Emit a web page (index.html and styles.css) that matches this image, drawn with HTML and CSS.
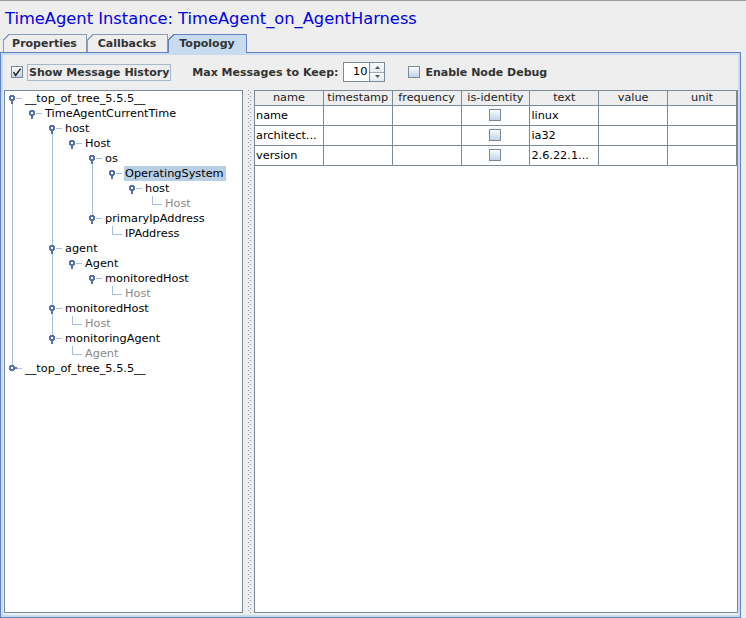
FILE: index.html
```html
<!DOCTYPE html>
<html>
<head>
<meta charset="utf-8">
<title>TimeAgent Instance</title>
<link rel="stylesheet" href="styles.css">
</head>
<body>
<div class="title">TimeAgent Instance: TimeAgent_on_AgentHarness</div>
<div class="tabs">
  <div class="tab tab-props">Properties</div>
  <div class="tab tab-cb">Callbacks</div>
  <div class="tab tab-topo selected">Topology</div>
</div>
<div class="panel">
  <div class="panel-inner">
    <div class="toolbar">
      <span class="chk"><svg width="10" height="10" viewBox="0 0 10 10"><path d="M1.6 5.2 L3.6 8.4 L8.6 1.6" fill="none" stroke="#222" stroke-width="1.5"/></svg></span>
      <span class="focus-label">Show Message History</span>
      <span class="label max-label">Max Messages to Keep:</span>
      <span class="spinner">
        <span class="spin-field">10</span>
        <span class="spin-btns">
          <span class="spin-btn up"><svg width="5" height="3" viewBox="0 0 5 3"><path d="M0 3 L2.5 0 L5 3 Z" fill="#555"/></svg></span>
          <span class="spin-btn"><svg width="5" height="3" viewBox="0 0 5 3"><path d="M0 0 L2.5 3 L5 0 Z" fill="#555"/></svg></span>
        </span>
      </span>
      <span class="chk chk-debug"></span>
      <span class="label debug-label">Enable Node Debug</span>
    </div>
    <div class="split">
      <div class="tree">
        <div class="row"><span class="h nx"></span><span class="lbl">__top_of_tree_5.5.5__</span></div>
        <div class="row"><span class="c p"></span><span class="h"></span><span class="lbl">TimeAgentCurrentTime</span></div>
        <div class="row"><span class="c p"></span><span class="c"></span><span class="h nx"></span><span class="lbl">host</span></div>
        <div class="row"><span class="c p"></span><span class="c"></span><span class="c p"></span><span class="h"></span><span class="lbl">Host</span></div>
        <div class="row"><span class="c p"></span><span class="c"></span><span class="c p"></span><span class="c"></span><span class="h nx"></span><span class="lbl">os</span></div>
        <div class="row"><span class="c p"></span><span class="c"></span><span class="c p"></span><span class="c"></span><span class="c p"></span><span class="h"></span><span class="lbl sel">OperatingSystem</span></div>
        <div class="row"><span class="c p"></span><span class="c"></span><span class="c p"></span><span class="c"></span><span class="c p"></span><span class="c"></span><span class="h"></span><span class="lbl">host</span></div>
        <div class="row leaf"><span class="c p"></span><span class="c"></span><span class="c p"></span><span class="c"></span><span class="c p"></span><span class="c"></span><span class="c"></span><span class="lf"></span><span class="lbl">Host</span></div>
        <div class="row"><span class="c p"></span><span class="c"></span><span class="c p"></span><span class="c"></span><span class="h pv"></span><span class="lbl">primaryIpAddress</span></div>
        <div class="row"><span class="c p"></span><span class="c"></span><span class="c p"></span><span class="c"></span><span class="c"></span><span class="lf"></span><span class="lbl">IPAddress</span></div>
        <div class="row"><span class="c p"></span><span class="c"></span><span class="h pv nx"></span><span class="lbl">agent</span></div>
        <div class="row"><span class="c p"></span><span class="c"></span><span class="c p"></span><span class="h"></span><span class="lbl">Agent</span></div>
        <div class="row"><span class="c p"></span><span class="c"></span><span class="c p"></span><span class="c"></span><span class="h"></span><span class="lbl">monitoredHost</span></div>
        <div class="row leaf"><span class="c p"></span><span class="c"></span><span class="c p"></span><span class="c"></span><span class="c"></span><span class="lf"></span><span class="lbl">Host</span></div>
        <div class="row"><span class="c p"></span><span class="c"></span><span class="h pv nx"></span><span class="lbl">monitoredHost</span></div>
        <div class="row leaf"><span class="c p"></span><span class="c"></span><span class="c p"></span><span class="lf"></span><span class="lbl">Host</span></div>
        <div class="row"><span class="c p"></span><span class="c"></span><span class="h pv"></span><span class="lbl">monitoringAgent</span></div>
        <div class="row leaf"><span class="c p"></span><span class="c"></span><span class="c"></span><span class="lf"></span><span class="lbl">Agent</span></div>
        <div class="row"><span class="h col pv"></span><span class="lbl">__top_of_tree_5.5.5__</span></div>
      </div>
      <div class="divider"></div>
      <div class="tablepane">
        <table class="grid">
          <thead>
            <tr><th>name</th><th>timestamp</th><th>frequency</th><th>is-identity</th><th>text</th><th>value</th><th>unit</th></tr>
          </thead>
          <tbody>
            <tr><td>name</td><td></td><td></td><td class="ctr"><span class="tchk"></span></td><td>linux</td><td></td><td></td></tr>
            <tr><td>architect...</td><td></td><td></td><td class="ctr"><span class="tchk"></span></td><td>ia32</td><td></td><td></td></tr>
            <tr><td>version</td><td></td><td></td><td class="ctr"><span class="tchk"></span></td><td>2.6.22.1...</td><td></td><td></td></tr>
          </tbody>
        </table>
      </div>
    </div>
  </div>
</div>
</body>
</html>
```
FILE: styles.css
```css
* { box-sizing: border-box; }
html, body { margin: 0; padding: 0; }
body {
  width: 746px;
  height: 618px;
  overflow: hidden;
  background: #eeeeee;
  border-top: 1px solid #9a9a9a;
  font-family: "DejaVu Sans", sans-serif;
  color: #000;
}

/* title */
.title {
  height: 33px;
  padding: 3px 0 0 5px;
  font-size: 16.3px;
  line-height: 30px;
  color: #0000e8;
  white-space: nowrap;
}

/* tabs */
.tabs {
  display: flex;
  align-items: flex-start;
  height: 18px;
  padding-left: 3px;
  position: relative;
  z-index: 1;
}
.tab {
  --bc: #8a9cb4;
  --bg: #eeeeee;
  height: 18px;
  padding-top: 1px;
  border-right: 1px solid var(--bc);
  font-size: 11px;
  font-weight: bold;
  line-height: 17px;
  color: #333;
  text-align: center;
  white-space: nowrap;
  background:
    linear-gradient(to bottom right, #eeeeee 0 calc(50% - 0.8px), var(--bc) calc(50% - 0.8px) calc(50% + 0.5px), transparent calc(50% + 0.5px)) 0 0 / 7px 7px no-repeat,
    linear-gradient(var(--bc), var(--bc)) 0 0 / 100% 1px no-repeat,
    linear-gradient(var(--bc), var(--bc)) 0 0 / 1px 100% no-repeat,
    var(--bg);
}
.tab-props { width: 84px; }
.tab-cb { width: 81px; }
.tab-topo { width: 79px; }
.tab.selected {
  --bc: #6382bf;
  --bg: #c8dcf0;
  height: 19px;
}

/* panel */
.panel {
  width: 741px;
  height: 566px;
  border: 1px solid #6382bf;
}
.panel-inner {
  height: 100%;
  border: 2px solid #c8dcf0;
  display: flex;
  flex-direction: column;
}

/* toolbar */
.toolbar {
  height: 35px;
  flex: none;
  display: flex;
  align-items: center;
  padding: 0 0 1px 8px;
  font-size: 11px;
  font-weight: bold;
  color: #333;
  white-space: nowrap;
}
.chk {
  width: 12px;
  height: 12px;
  flex: none;
  border: 1px solid #7a8a99;
  background: linear-gradient(#fbfcfe, #dce6f1 50%, #c2d4e8);
  display: flex;
}
.focus-label {
  margin-left: 4px;
  height: 17px;
  line-height: 15px;
  padding: 0 1px;
  border: 1px solid #a6b8cc;
}
.max-label { margin-left: 21px; }
.spinner {
  margin-left: 5px;
  display: flex;
  height: 20px;
  width: 42px;
}
.spin-field {
  width: 26px;
  height: 20px;
  border: 1px solid #7a8a99;
  border-right: none;
  background: #fff;
  font-size: 11.3px;
  font-weight: normal;
  color: #000;
  text-align: right;
  padding-right: 2px;
  line-height: 18px;
}
.spin-btns {
  width: 16px;
  height: 20px;
  display: flex;
  flex-direction: column;
  border: 1px solid #7a8a99;
}
.spin-btn {
  flex: 1;
  display: flex;
  align-items: center;
  justify-content: center;
  background: linear-gradient(#fafcfe, #e3eaf2);
}
.spin-btn.up { border-bottom: 1px solid #9aa8b8; }
.chk-debug { margin-left: 23px; }
.debug-label { margin-left: 5px; }

/* split pane */
.split {
  flex: 1;
  display: flex;
  padding: 0 0 2px 1px;
}
.tree {
  --ln: #a9c0da;
  --ic: #5573b2;
  width: 239px;
  height: 523px;
  flex: none;
  border: 1px solid #7a8a99;
  background: #fff;
  font-size: 11.3px;
}
.row {
  display: flex;
  height: 15px;
}
.c, .h, .lf {
  width: 20px;
  height: 15px;
  flex: none;
}
.c.p {
  background: linear-gradient(var(--ln), var(--ln)) 7px 0 / 1px 100% no-repeat;
}
.h {
  --pv: linear-gradient(transparent, transparent);
  --nx: linear-gradient(transparent, transparent);
  --stem: linear-gradient(var(--ic), var(--ic)) 6px 9px / 2px 4px no-repeat;
  background:
    radial-gradient(circle at 7px 7px, #ffffff 0 1.2px, var(--ic) 1.5px 3px, transparent 3.4px),
    var(--stem),
    linear-gradient(var(--ln), var(--ln)) 11px 7px / 6px 1px no-repeat,
    var(--pv),
    var(--nx);
}
.h.col {
  --stem: linear-gradient(var(--ic), var(--ic)) 9px 6px / 3px 2px no-repeat;
}
.h.pv {
  --pv: linear-gradient(var(--ln), var(--ln)) 7px 0 / 1px 4px no-repeat;
}
.h.nx {
  --nx: linear-gradient(var(--ln), var(--ln)) 7px 10px / 1px 5px no-repeat;
}
.lf {
  background:
    linear-gradient(var(--ln), var(--ln)) 7px 0 / 1px 9px no-repeat,
    linear-gradient(var(--ln), var(--ln)) 7px 8px / 10px 1px no-repeat;
}
.lbl {
  line-height: 15px;
  height: 15px;
  padding: 0 2px 0 1px;
  margin-left: -1px;
  white-space: nowrap;
}
.leaf .lbl { color: #8a8a8a; }
.lbl.sel { background: #b8cfe5; }

.divider {
  width: 11px;
  flex: none;
  background:
    repeating-linear-gradient(#8d9db3 0 1px, transparent 1px 4px) 5px 0 / 1px 100% no-repeat,
    repeating-linear-gradient(#8d9db3 0 1px, transparent 1px 4px) 7px 2px / 1px 100% no-repeat;
}

/* table */
.tablepane {
  width: 484px;
  height: 523px;
  flex: none;
  border: 1px solid #7a8a99;
  background: #fff;
  overflow: hidden;
}
.grid {
  width: 482px;
  table-layout: fixed;
  border-collapse: separate;
  border-spacing: 0;
  font-size: 11.3px;
}
.grid th {
  height: 15px;
  padding: 0;
  background: #eeeeee;
  border-right: 1px solid #7a8a99;
  border-bottom: 1px solid #7a8a99;
  font-weight: normal;
  color: #222;
  line-height: 14px;
  text-align: center;
  white-space: nowrap;
}
.grid td {
  height: 20px;
  padding: 0 0 0 1px;
  border-right: 1px solid #7a8a99;
  border-bottom: 1px solid #7a8a99;
  line-height: 19px;
  white-space: nowrap;
  overflow: hidden;
}
.grid td.ctr {
  text-align: center;
  padding: 0;
}
.tchk {
  display: inline-block;
  vertical-align: middle;
  width: 12px;
  height: 12px;
  margin-top: -2px;
  border: 1px solid #7a8a99;
  background: linear-gradient(#fbfcfe, #dce6f1 50%, #c2d4e8);
}
```
